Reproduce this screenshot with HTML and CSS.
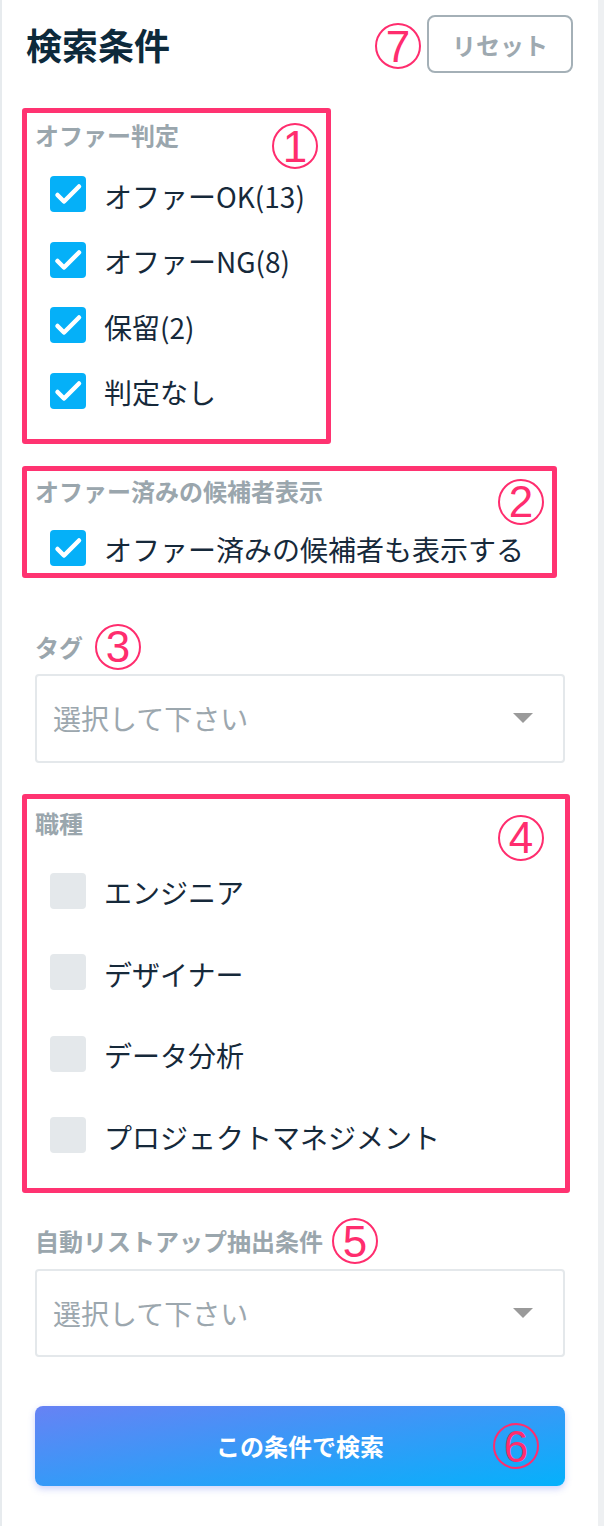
FILE: index.html
```html
<!DOCTYPE html>
<html lang="ja">
<head>
<meta charset="utf-8">
<title>検索条件</title>
<link rel="stylesheet" href="styles.css">
</head>
<body>
<div class="panel">
  <div class="head">
    <h1 class="title">検索条件</h1>
    <div class="head-actions">
      <span class="num">7</span>
      <button class="reset" type="button">リセット</button>
    </div>
  </div>

  <section class="mark mark-1">
    <div class="group-head">
      <span class="label">オファー判定</span>
      <span class="num">1</span>
    </div>
    <ul class="checks checks-tight">
      <li class="check"><span class="box on"><svg viewBox="0 0 36 36"><polyline points="7.5,19 14,25.5 29,10.5"/></svg></span><span class="text">オファーOK(13)</span></li>
      <li class="check"><span class="box on"><svg viewBox="0 0 36 36"><polyline points="7.5,19 14,25.5 29,10.5"/></svg></span><span class="text">オファーNG(8)</span></li>
      <li class="check"><span class="box on"><svg viewBox="0 0 36 36"><polyline points="7.5,19 14,25.5 29,10.5"/></svg></span><span class="text">保留(2)</span></li>
      <li class="check"><span class="box on"><svg viewBox="0 0 36 36"><polyline points="7.5,19 14,25.5 29,10.5"/></svg></span><span class="text">判定なし</span></li>
    </ul>
  </section>

  <section class="mark mark-2">
    <div class="group-head">
      <span class="label">オファー済みの候補者表示</span>
      <span class="num">2</span>
    </div>
    <ul class="checks">
      <li class="check"><span class="box on"><svg viewBox="0 0 36 36"><polyline points="7.5,19 14,25.5 29,10.5"/></svg></span><span class="text">オファー済みの候補者も表示する</span></li>
    </ul>
  </section>

  <div class="field field-tag">
    <div class="field-head">
      <span class="label">タグ</span>
      <span class="num">3</span>
    </div>
    <div class="select">
      <span class="placeholder">選択して下さい</span>
      <svg class="caret" viewBox="0 0 20 10"><polygon points="0,0 20,0 10,10"/></svg>
    </div>
  </div>

  <section class="mark mark-4">
    <div class="group-head">
      <span class="label">職種</span>
      <span class="num">4</span>
    </div>
    <ul class="checks checks-wide">
      <li class="check"><span class="box"></span><span class="text">エンジニア</span></li>
      <li class="check"><span class="box"></span><span class="text">デザイナー</span></li>
      <li class="check"><span class="box"></span><span class="text">データ分析</span></li>
      <li class="check"><span class="box"></span><span class="text">プロジェクトマネジメント</span></li>
    </ul>
  </section>

  <div class="field field-auto">
    <div class="field-head">
      <span class="label">自動リストアップ抽出条件</span>
      <span class="num">5</span>
    </div>
    <div class="select">
      <span class="placeholder">選択して下さい</span>
      <svg class="caret" viewBox="0 0 20 10"><polygon points="0,0 20,0 10,10"/></svg>
    </div>
  </div>

  <button class="search" type="button">
    <span class="search-text">この条件で検索</span>
    <span class="num num-on-btn">6</span>
  </button>
</div>
</body>
</html>
```

FILE: styles.css
```css
* {
  box-sizing: border-box;
}

html, body {
  margin: 0;
  padding: 0;
  background: #ffffff;
}

body {
  font-family: "Noto Sans CJK JP", "Noto Sans", sans-serif;
  color: #16293a;
}

.panel {
  width: 604px;
  min-height: 1526px;
  border-left: 2px solid #e7ebee;
  border-right: 6px solid #eef0f2;
  padding: 15px 33px 0 33px;
}

.head {
  display: flex;
  align-items: center;
  justify-content: space-between;
  height: 58px;
  margin-left: -9px;
  margin-right: -8px;
}

.title {
  margin: 0;
  font-size: 36px;
  line-height: 36px;
  font-weight: 700;
  color: #0d2a3b;
}

.head-actions {
  display: flex;
  align-items: center;
  gap: 6px;
}

.reset {
  width: 146px;
  height: 58px;
  border: 2px solid #a4b0b7;
  border-radius: 8px;
  background: #ffffff;
  font-family: "Noto Sans CJK JP", "Noto Sans", sans-serif;
  font-size: 24px;
  font-weight: 700;
  color: #9ea9b0;
  padding: 0;
}

.num {
  flex: none;
  width: 46px;
  height: 46px;
  border: 2px solid #ff2d6e;
  border-radius: 50%;
  display: flex;
  align-items: center;
  justify-content: center;
  font-family: "Liberation Sans", Arial, sans-serif;
  font-size: 44px;
  line-height: 1;
  color: #ff2d6e;
  padding-top: 1px;
}

.head-actions .num {
  margin-top: 4px;
}

.mark {
  border: 5px solid #ff3371;
  border-radius: 3px;
  margin-left: -13px;
  padding-left: 8px;
  padding-right: 8px;
}

.mark-1 {
  width: 309px;
  margin-top: 35px;
  padding-top: 10px;
  padding-bottom: 30px;
}

.mark-2 {
  width: 535px;
  margin-top: 22px;
  padding-top: 8px;
  padding-bottom: 7px;
}

.mark-4 {
  width: 548px;
  margin-top: 31px;
  padding-top: 12px;
  padding-bottom: 35px;
}

.group-head {
  display: flex;
  align-items: flex-start;
  justify-content: space-between;
}

.mark-4 .group-head .num {
  margin-top: 4px;
  margin-right: 13px;
}

.label {
  font-size: 24px;
  line-height: 24px;
  font-weight: 700;
  color: #9aa6ad;
}

.checks {
  list-style: none;
  margin: 0;
  padding: 0 0 0 15px;
  display: flex;
  flex-direction: column;
}

.mark-1 .checks {
  margin-top: 7px;
  gap: 29.5px;
}

.mark-2 .checks {
  margin-top: 5px;
}

.mark-4 .checks {
  margin-top: 12px;
  gap: 45.67px;
}

.check {
  display: flex;
  align-items: center;
  gap: 18px;
  height: 36px;
}

.box {
  flex: none;
  width: 36px;
  height: 36px;
  border-radius: 4px;
  background: #e4e8eb;
  display: flex;
}

.box.on {
  background: #05b0f8;
}

.box svg {
  width: 36px;
  height: 36px;
}

.box polyline {
  fill: none;
  stroke: #ffffff;
  stroke-width: 4.5;
  stroke-linecap: round;
  stroke-linejoin: round;
}

.text {
  font-size: 28px;
  line-height: 36px;
  color: #16293a;
  white-space: nowrap;
  padding-top: 3px;
}

.field-tag {
  margin-top: 46px;
}

.field-auto {
  margin-top: 25px;
}

.field-head {
  display: flex;
  align-items: center;
  height: 46px;
}

.field-tag .field-head {
  gap: 12px;
}

.field-auto .field-head {
  gap: 9px;
}

.select {
  display: flex;
  align-items: center;
  justify-content: space-between;
  height: 89px;
  border: 2px solid #e4e8eb;
  border-radius: 4px;
  padding: 0 30px 0 16px;
}

.field-tag .select {
  margin-top: 4px;
}

.field-auto .select {
  margin-top: 5px;
  height: 88px;
}

.placeholder {
  font-size: 28px;
  line-height: 36px;
  color: #9ca7ae;
}

.caret {
  width: 20px;
  height: 10px;
}

.caret polygon {
  fill: #9a9a9a;
}

.search {
  display: grid;
  grid-template-columns: 1fr auto 1fr;
  align-items: center;
  width: 100%;
  height: 80px;
  margin-top: 49px;
  border: none;
  border-radius: 8px;
  background: linear-gradient(to bottom right, #6782f4, #05b1fb);
  box-shadow: 0 3px 7px rgba(90, 110, 240, 0.3);
  padding: 0 26px;
  font-family: "Noto Sans CJK JP", "Noto Sans", sans-serif;
}

.search-text {
  grid-column: 2;
  font-size: 24px;
  line-height: 24px;
  font-weight: 700;
  color: #ffffff;
}

.num-on-btn {
  grid-column: 3;
  justify-self: end;
}
```
